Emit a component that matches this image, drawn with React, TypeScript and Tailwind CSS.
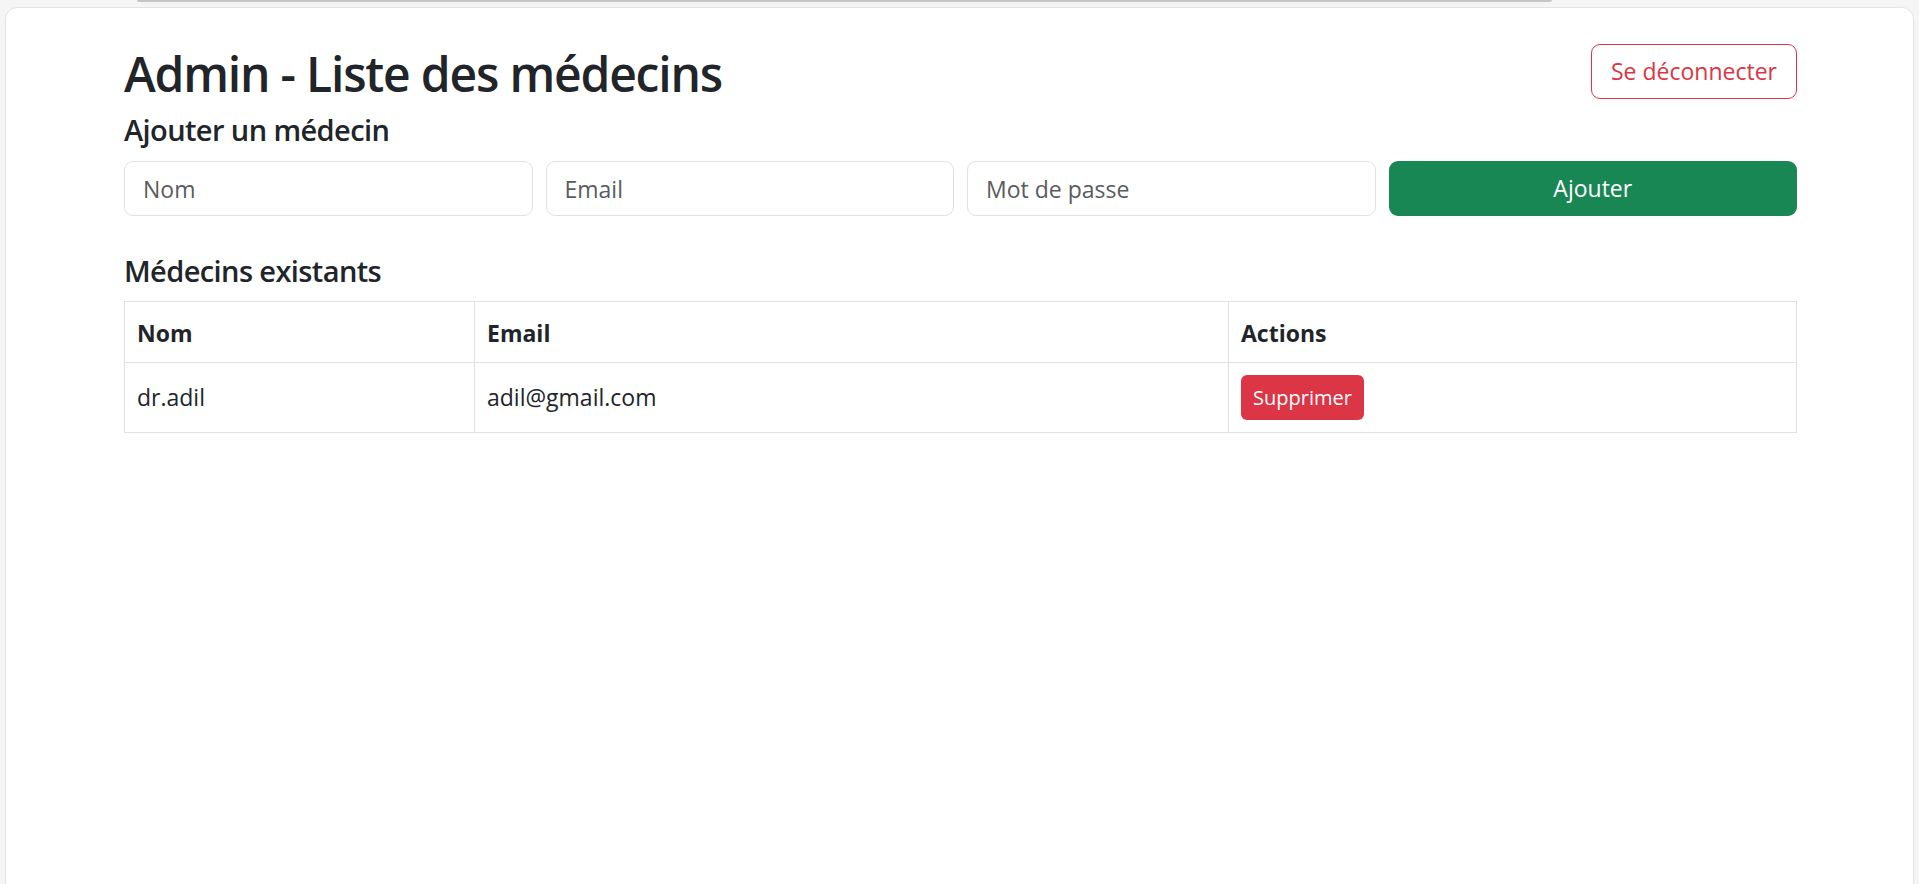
import { useState } from "react";

type Medecin = { id: number; nom: string; email: string };

export default function App() {
    const [medecins, setMedecins] = useState<Medecin[]>([
        { id: 1, nom: "dr.adil", email: "adil@gmail.com" },
    ]);
    const [nom, setNom] = useState("");
    const [email, setEmail] = useState("");
    const [password, setPassword] = useState("");

    const ajouter = () => {
        if (!nom || !email) return;
        setMedecins([...medecins, { id: Date.now(), nom, email }]);
        setNom("");
        setEmail("");
        setPassword("");
    };

    const inputCls =
        "h-[55px] w-full rounded-[9px] border border-[#dee2e6] bg-white px-[18px] text-[23px] text-[#212529] outline-none placeholder:text-[#595c5f]";

    return (
        <div className="h-[884px] overflow-hidden bg-[#f5f5f5] font-['Open_Sans',sans-serif] text-[#212529]">
            {/* bottom of the element above */}
            <div className="ml-[137px] h-[2px] w-[1415px] rounded-b-full bg-[#c6c6c6]" />

            <div className="mx-[5px] mt-[5px] h-[900px] rounded-t-[12px] border border-[#e3e3e3] bg-white pt-[33px]">
                <div className="ml-[118px] w-[1673px]">
                    {/* Header */}
                    <div className="flex h-[60px] items-center justify-between">
                        <h1 className="pt-[5px] text-[48px] font-semibold leading-[60px] tracking-[-1.2px]">
                            Admin - Liste des médecins
                        </h1>
                        <button className="h-[55px] rounded-[9px] border border-[#dc3545] bg-white px-[19px] text-[23px] leading-none text-[#dc3545]">
                            Se déconnecter
                        </button>
                    </div>

                    {/* Ajout */}
                    <h4 className="mt-[11px] text-[29px] font-semibold leading-[36px] tracking-[-0.6px]">
                        Ajouter un médecin
                    </h4>
                    <div className="mt-[13px] grid grid-cols-4 gap-[13px]">
                        <input className={inputCls} placeholder="Nom" value={nom} onChange={e => setNom(e.target.value)} />
                        <input className={inputCls} placeholder="Email" value={email} onChange={e => setEmail(e.target.value)} />
                        <input
                            className={inputCls}
                            type="password"
                            placeholder="Mot de passe"
                            value={password}
                            onChange={e => setPassword(e.target.value)}
                        />
                        <button
                            onClick={ajouter}
                            className="h-[55px] rounded-[9px] bg-[#198754] text-[23px] leading-none text-white"
                        >
                            Ajouter
                        </button>
                    </div>

                    {/* Liste */}
                    <h4 className="mt-[37px] text-[29px] font-semibold leading-[36px] tracking-[-0.6px]">
                        Médecins existants
                    </h4>
                    <table className="mt-[12px] w-full table-fixed border-collapse border border-[#dee2e6] text-[23px]">
                        <colgroup>
                            <col className="w-[350px]" />
                            <col className="w-[754px]" />
                            <col />
                        </colgroup>
                        <thead>
                            <tr className="h-[61px]">
                                <th className="border border-[#dee2e6] px-[12px] pt-[2px] text-left align-middle font-bold">Nom</th>
                                <th className="border border-[#dee2e6] px-[12px] pt-[2px] text-left align-middle font-bold">Email</th>
                                <th className="border border-[#dee2e6] px-[12px] pt-[2px] text-left align-middle font-bold">Actions</th>
                            </tr>
                        </thead>
                        <tbody>
                            {medecins.map(m => (
                                <tr key={m.id} className="h-[70px]">
                                    <td className="border border-[#dee2e6] px-[12px] align-middle">{m.nom}</td>
                                    <td className="border border-[#dee2e6] px-[12px] align-middle">{m.email}</td>
                                    <td className="border border-[#dee2e6] px-[12px] align-middle">
                                        <button
                                            onClick={() => setMedecins(medecins.filter(x => x.id !== m.id))}
                                            className="h-[45px] rounded-[6px] bg-[#dc3545] px-[12px] text-[20px] leading-none text-white"
                                        >
                                            Supprimer
                                        </button>
                                    </td>
                                </tr>
                            ))}
                        </tbody>
                    </table>
                </div>
            </div>
        </div>
    );
}
